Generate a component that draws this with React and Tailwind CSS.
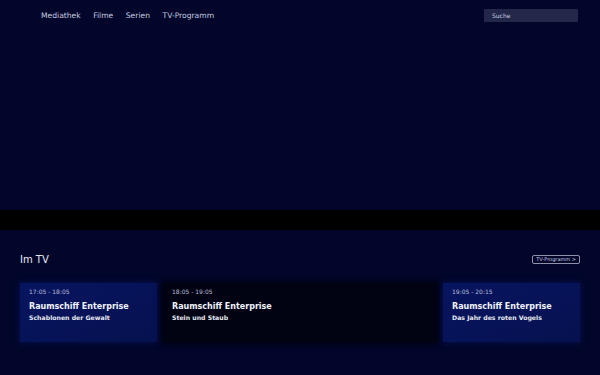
import React from 'react';

const programs = [
  { time: '17:05 - 18:05', title: 'Raumschiff Enterprise', episode: 'Schablonen der Gewalt', live: false },
  { time: '18:05 - 19:05', title: 'Raumschiff Enterprise', episode: 'Stein und Staub', live: true },
  { time: '19:05 - 20:15', title: 'Raumschiff Enterprise', episode: 'Das Jahr des roten Vogels', live: false },
];

const App = () => {
  return (
    <div
      className="w-[600px] h-[375px] overflow-hidden bg-[#02062a] text-white flex flex-col"
      style={{ fontFamily: '"DejaVu Sans", sans-serif' }}
    >
      {/* Header */}
      <header className="h-[30px] flex items-center justify-between pl-[41px] pr-[22px] pt-[1px]">
        <nav className="flex items-center gap-[12.5px] text-[7.6px] text-[#c9cde0]">
          <span>Mediathek</span>
          <span>Filme</span>
          <span>Serien</span>
          <span>TV-Programm</span>
        </nav>
        <div className="w-[94px] h-[13px] bg-[#23284a] rounded-[1px] flex items-center px-[8px] text-[6px] text-[#c9cde0]">
          Suche
        </div>
      </header>

      {/* Hero placeholder */}
      <div className="h-[180px]" />
      <div className="h-[20px] bg-black" />

      {/* Im TV */}
      <section className="flex-1 px-[20px] pt-[22px]">
        <div className="flex items-center justify-between">
          <h2 className="text-[10px] text-[#e6e8f2]">Im TV</h2>
          <button className="h-[9px] px-[3px] border border-[#8c90a8] rounded-[2px] text-[5px] text-[#c9cde0] leading-none flex items-center">
            TV-Programm &gt;
          </button>
        </div>
        <div className="mt-[16px] flex gap-[6px]">
          {programs.map((p, i) => (
            <div
              key={i}
              className={`h-[59px] px-[9px] pt-[5px] flex flex-col ${
                p.live
                  ? 'w-[274px] bg-[#020312] shadow-[0_0_6px_2px_rgba(0,0,0,0.6)]'
                  : 'w-[137px] bg-gradient-to-br from-[#071560] to-[#06114f] shadow-[0_0_6px_1px_rgba(6,18,90,0.7)]'
              }`}
            >
              <div className="text-[6px] leading-[8px] text-[#b8bdd8]">{p.time}</div>
              <div className="mt-[6px] text-[8px] leading-[10px] font-bold text-[#f0f2fa]">{p.title}</div>
              <div className="mt-[2px] text-[6.2px] leading-[8px] font-bold text-[#e6e8f2]">{p.episode}</div>
            </div>
          ))}
        </div>
      </section>
    </div>
  );
};

export default App;
